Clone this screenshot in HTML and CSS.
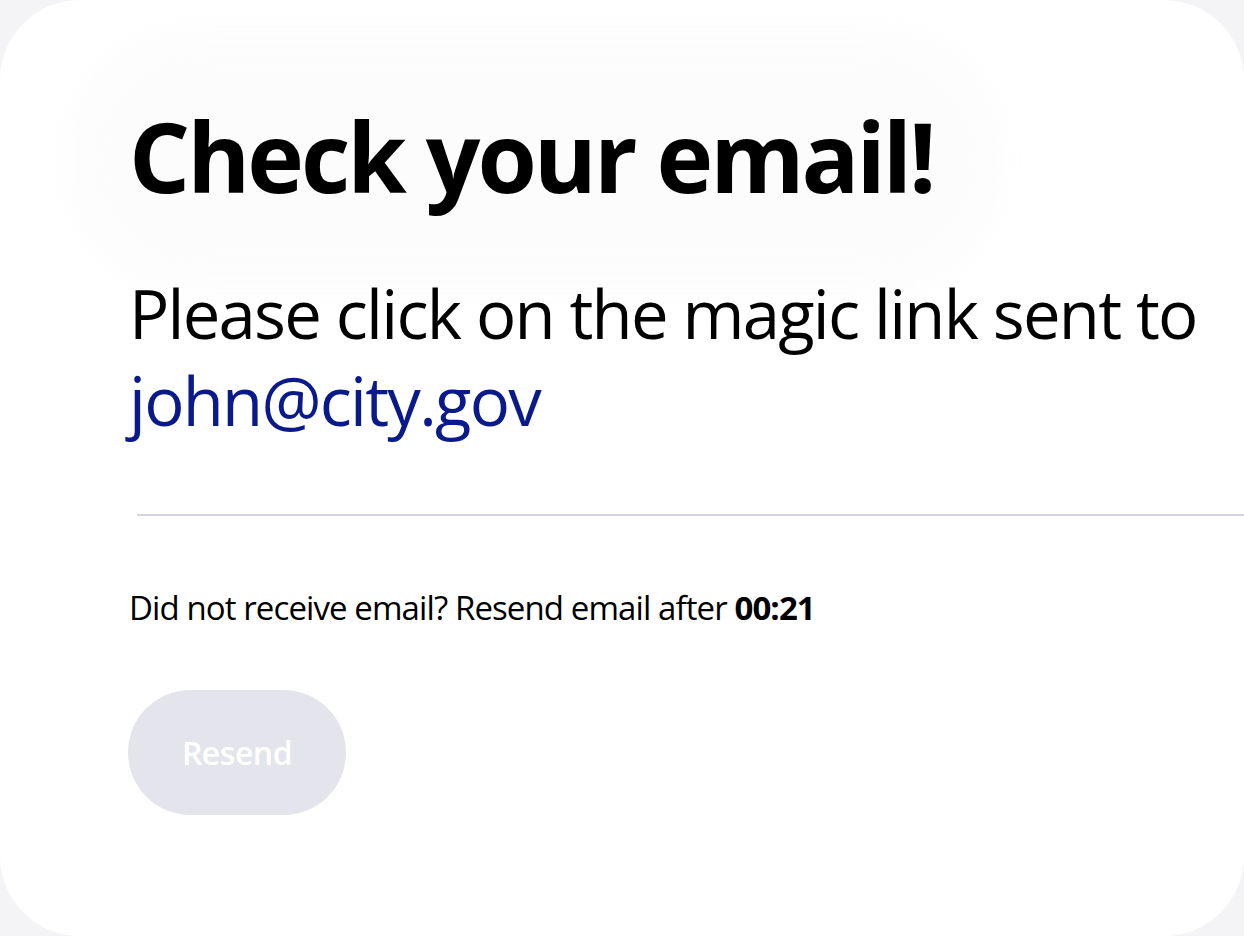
FILE: index.html
```html
<!DOCTYPE html>
<html lang="en">
<head>
<meta charset="utf-8">
<title>Check your email</title>
<link rel="stylesheet" href="styles.css">
</head>
<body>
<main class="card">
  <div class="glow"></div>
  <h1 class="title">Check your email!</h1>
  <p class="lead">Please click on the magic link sent to <span class="email">john@city.gov</span></p>
  <hr class="divider">
  <p class="note">Did not receive email? Resend email after <strong>00:21</strong></p>
  <button class="resend" disabled>Resend</button>
</main>
</body>
</html>
```

FILE: styles.css
```css
html, body {
  margin: 0;
  padding: 0;
  background: #f4f4f7;
}
body {
  width: 1244px;
  height: 936px;
  overflow: hidden;
  font-family: "Open Sans", "Noto Sans", sans-serif;
  color: #000;
}
.card {
  position: relative;
  box-sizing: border-box;
  width: 1244px;
  height: 936px;
  background: #fff;
  border-radius: 80px;
  padding: 96px 0 0 129px;
  display: flex;
  flex-direction: column;
  align-items: flex-start;
}
.glow {
  position: absolute;
  left: 70px;
  top: 30px;
  width: 930px;
  height: 260px;
  border-radius: 120px;
  background: #fcfcfd;
  filter: blur(16px);
  z-index: 0;
}
.title, .lead, .divider, .note, .resend { position: relative; z-index: 1; }
.title {
  margin: 0;
  font-size: 96px;
  font-weight: 700;
  line-height: 120px;
  letter-spacing: -3px;
}
.lead {
  margin: 54px 0 0 0;
  width: 1110px;
  font-size: 67px;
  line-height: 87px;
  font-weight: 400;
  letter-spacing: -1.75px;
}
.email { color: #0a1a8a; }
.divider {
  align-self: stretch;
  margin: 70px 0 0 8px;
  border: 0;
  height: 2px;
  background: #d3d4e0;
}
.note {
  margin: 70px 0 0 0;
  font-size: 33px;
  line-height: 44px;
  letter-spacing: -0.9px;
}
.note strong { font-weight: 700; }
.resend {
  margin-top: 60px;
  margin-left: -1px;
  width: 218px;
  height: 125px;
  border: 0;
  border-radius: 63px;
  background: #e3e4ec;
  color: #fff;
  font-family: "Open Sans", "Noto Sans", sans-serif;
  font-size: 32px;
  font-weight: 600;
  letter-spacing: -0.5px;
}
```
